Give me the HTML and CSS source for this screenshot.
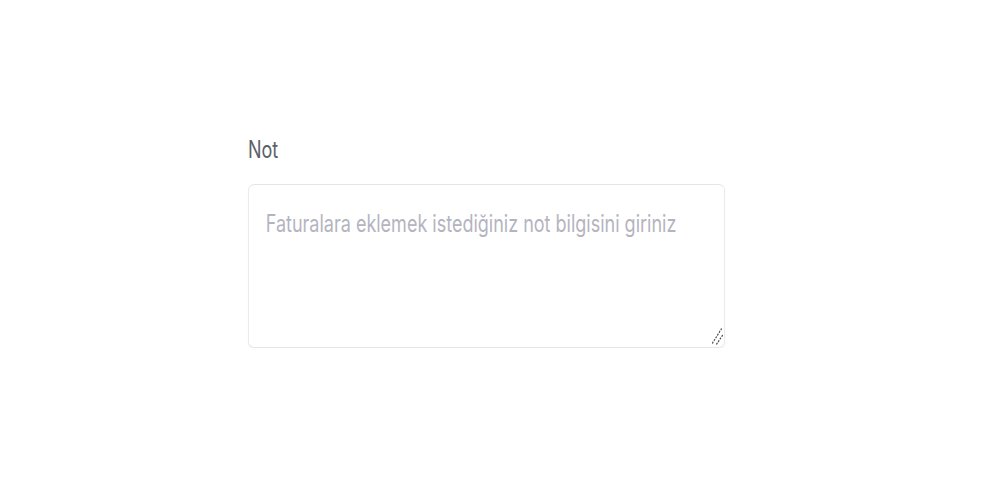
FILE: index.html
```html
<!DOCTYPE html>
<html lang="tr">
<head>
<meta charset="utf-8">
<title>Not</title>
<link rel="stylesheet" href="styles.css">
</head>
<body>
  <div class="page">
    <div class="field">
      <label class="field-label" for="note">Not</label>
      <div class="input-wrap">
        <textarea id="note" class="field-input" placeholder="Faturalara eklemek istediğiniz not bilgisini giriniz"></textarea>
        <svg class="grip" width="16" height="18" viewBox="0 0 16 18" aria-hidden="true">
          <line x1="1" y1="16.5" x2="14" y2="1" stroke="#4d5056" stroke-width="1.5" stroke-dasharray="2.2 1.3"/>
          <line x1="6.5" y1="17.5" x2="15" y2="8" stroke="#4d5056" stroke-width="1.5" stroke-dasharray="2.2 1.3"/>
        </svg>
      </div>
    </div>
  </div>
</body>
</html>
```
FILE: styles.css
```css
html, body {
  margin: 0;
  padding: 0;
  background: #ffffff;
}

.page {
  padding-top: 135px;
  padding-left: 248px;
}

.field {
  width: 636px;
  transform: scaleX(0.75);
  transform-origin: left top;
  display: flex;
  flex-direction: column;
  font-family: Inter, "Noto Sans", sans-serif;
}

.field-label {
  font-size: 24px;
  line-height: 29px;
  color: #5b5f69;
  margin-bottom: 20px;
}

.input-wrap {
  position: relative;
  display: flex;
}

.field-input {
  box-sizing: border-box;
  width: 100%;
  height: 164px;
  margin: 0;
  padding: 24px 22.7px 20px;
  border-style: solid;
  border-color: #e3e5e9;
  border-width: 1px 1.33px 1.5px;
  border-radius: 8.5px / 6.5px;
  box-shadow: 0 1px 2px rgba(0, 0, 0, 0.05);
  font-family: Inter, "Noto Sans", sans-serif;
  font-size: 24px;
  line-height: 29px;
  color: #374151;
  background: #ffffff;
  outline: none;
  resize: none;
}

.field-input::placeholder {
  color: #b4b4bf;
  opacity: 1;
}

.grip {
  position: absolute;
  right: 2px;
  bottom: 3px;
  pointer-events: none;
}
```
